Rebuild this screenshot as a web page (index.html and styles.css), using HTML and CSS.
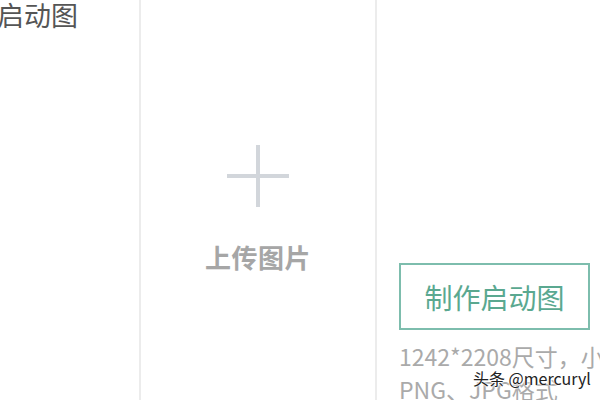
FILE: index.html
```html
<!DOCTYPE html>
<html lang="zh">
<head>
<meta charset="utf-8">
<link rel="stylesheet" href="styles.css">
</head>
<body>
<div class="page">
  <div class="col col-label">
    <div class="title">启动图</div>
  </div>
  <div class="col col-upload">
    <svg class="plus" width="62" height="62" viewBox="0 0 62 62">
      <path d="M31 0V62M0 31H62" stroke="#d2d6db" stroke-width="4" fill="none"/>
    </svg>
    <div class="upload-label">上传图片</div>
  </div>
  <div class="col col-make">
    <div class="make-btn">制作启动图</div>
    <div class="hint">1242*2208尺寸，小于1M，支持<br>PNG、JPG格式</div>
  </div>
  <div class="watermark">头条 @mercuryl</div>
</div>
</body>
</html>
```
FILE: styles.css
```css
html, body {
  margin: 0;
  padding: 0;
  background: #fff;
}
body {
  font-family: "Noto Sans CJK SC", "Noto Sans", sans-serif;
  width: 600px;
  height: 400px;
  overflow: hidden;
}
.page {
  position: relative;
  display: flex;
  width: 600px;
  height: 400px;
  overflow: hidden;
}
.col {
  height: 100%;
}
.col-label {
  width: 139px;
  border-right: 2px solid #ececec;
}
.title {
  margin-left: -3px;
  margin-top: -3px;
  font-size: 27px;
  line-height: 36px;
  color: #555;
  white-space: nowrap;
}
.col-upload {
  width: 236px;
  border-right: 2px solid #ececec;
  display: flex;
  flex-direction: column;
  align-items: center;
  padding-top: 145px;
  box-sizing: border-box;
}
.plus {
  display: block;
}
.upload-label {
  margin-top: 35px;
  font-size: 26px;
  line-height: 30px;
  font-weight: bold;
  color: #a6a6a6;
  letter-spacing: 0.5px;
}
.col-make {
  flex: 1;
  padding-left: 22px;
  padding-top: 263px;
  box-sizing: border-box;
  min-width: 0;
}
.make-btn {
  width: 191px;
  height: 67px;
  box-sizing: border-box;
  border: 2px solid #7dbdad;
  color: #5aa890;
  font-size: 28px;
  display: flex;
  align-items: center;
  justify-content: center;
}
.hint {
  margin-top: 10px;
  font-size: 23px;
  line-height: 33px;
  color: #aaa;
  white-space: nowrap;
}
.watermark {
  position: absolute;
  left: 473px;
  top: 366px;
  font-size: 16px;
  line-height: 24px;
  color: #222;
  text-shadow: 0 0 2px #fff, 0 0 2px #fff, 0 0 3px #fff;
  white-space: nowrap;
}
```
